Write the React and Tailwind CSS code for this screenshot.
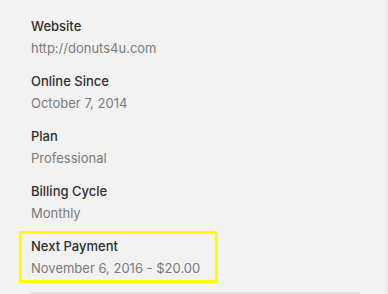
const rows = [
  ['Website', 'http://donuts4u.com'],
  ['Online Since', 'October 7, 2014'],
  ['Plan', 'Professional'],
  ['Billing Cycle', 'Monthly'],
];

function Field({ label, value }) {
  return (
    <div className="flex flex-col">
      <div className="leading-[22px] font-medium text-[#2e2e2e]">{label}</div>
      <div className="leading-[22px] text-[#7a7a7a]">{value}</div>
    </div>
  );
}

export default function App() {
  return (
    <div
      className="flex h-[294px] overflow-hidden bg-[#f2f2f2] text-[13px]"
      style={{ fontFamily: 'Inter, sans-serif' }}
    >
      <div className="flex flex-1 flex-col gap-[11px] pl-[31px] pt-[15px]">
        {rows.map(([l, v]) => (
          <Field key={l} label={l} value={v} />
        ))}
        <div className="-ml-[12px] -mt-[4px] w-[199px] rounded-[2px] border-[3px] border-[#ffff00] pb-[1px] pl-[9px] pt-[1px]">
          <Field label="Next Payment" value="November 6, 2016 - $20.00" />
        </div>
        <div className="-ml-[1px] -mt-[2px] h-[4px] w-[330px] shrink-0 bg-[#e4e4e4]" />
      </div>
      <div className="w-[3px] bg-gradient-to-r from-[#f0f0f0] to-[#e6e6e6]" />
    </div>
  );
}
